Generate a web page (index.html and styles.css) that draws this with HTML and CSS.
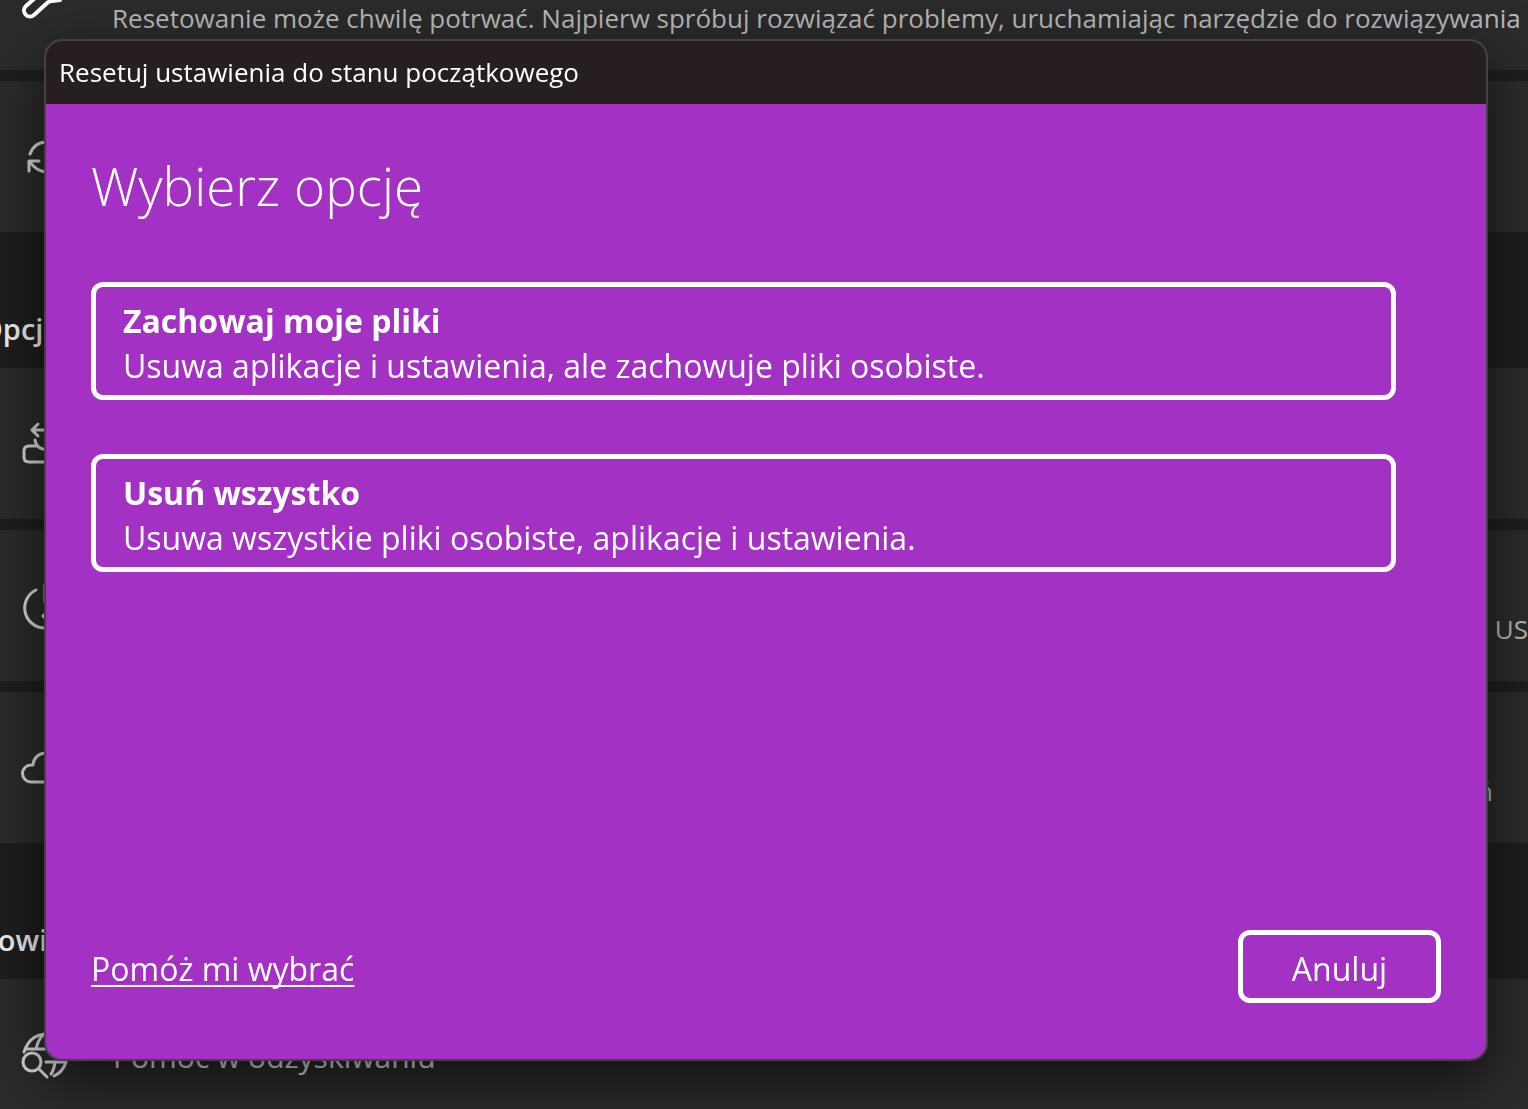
FILE: index.html
```html
<!DOCTYPE html>
<html lang="pl">

<head>
    <meta charset="UTF-8">
    <meta name="viewport" content="width=device-width, initial-scale=1.0">
    <title>Resetuj ustawienia do stanu początkowego</title>
    <link rel="stylesheet" href="styles.css">
</head>

<body>
    <!-- Ustawienia w tle -->
    <main class="settings">
        <div class="row">
            <svg class="icon bright" viewBox="0 0 48 48"><path d="M14 27L5 35a6 6 0 0 0 8 9L25 33q3-3 6-3l8-1"/></svg>
            <p class="description">Resetowanie może chwilę potrwać. Najpierw spróbuj rozwiązać problemy, uruchamiając narzędzie do rozwiązywania</p>
        </div>
        <div class="row">
            <svg class="icon" viewBox="0 0 48 48"><path d="M9 21C12 13 18 9 26 9M27 39C19 39 13 35 9 29M8 38V28h10"/></svg>
        </div>
        <h2>Opcj</h2>
        <div class="row">
            <svg class="icon" viewBox="0 0 48 48"><path d="M17 4l-6 6 6 6M11 10h29M15 26H8q-5 0-5 5v6q0 5 5 5h32M14 20q1 9 12 10"/></svg>
        </div>
        <div class="row">
            <svg class="icon" viewBox="0 0 48 48"><path d="M15 8A20 20 0 0 0 24 46M24 3v17"/><path class="solid" d="M22 34l5-4v8z"/></svg>
            <p class="description end">US</p>
        </div>
        <div class="row">
            <svg class="icon" viewBox="0 0 48 48"><path d="M38 38H10a8 8 0 0 1 0-17h2C13 13 18 9 26 9"/></svg>
            <p class="description end inset">ń</p>
        </div>
        <h2>Powi</h2>
        <div class="row">
            <svg class="icon" viewBox="0 0 48 48"><path d="M3 21C7 9 15 3 26 3M5 18h21M15 18q2-9 7-14M25 31h20q-3 10-12 14M34 31q-1 8-4 12"/><circle cx="11" cy="31" r="9"/><path d="M18 38l8 8"/></svg>
            <p class="name">Pomoc w odzyskiwaniu</p>
        </div>
    </main>

    <!-- Okno resetowania -->
    <div class="dialog" role="dialog" aria-labelledby="dialog-title">
        <header class="title-bar" id="dialog-title">Resetuj ustawienia do stanu początkowego</header>
        <div class="dialog-body">
            <h1>Wybierz opcję</h1>
            <div class="options">
                <button class="option" type="button">
                    <strong>Zachowaj moje pliki</strong>
                    <span>Usuwa aplikacje i ustawienia, ale zachowuje pliki osobiste.</span>
                </button>
                <button class="option" type="button">
                    <strong>Usuń wszystko</strong>
                    <span>Usuwa wszystkie pliki osobiste, aplikacje i ustawienia.</span>
                </button>
            </div>
            <footer class="dialog-footer">
                <a href="#">Pomóż mi wybrać</a>
                <button class="cancel" type="button">Anuluj</button>
            </footer>
        </div>
    </div>
</body>

</html>
```

FILE: styles.css
```css
* {
    margin: 0;
    padding: 0;
    box-sizing: border-box;
}

body {
    height: 100vh;
    font-family: "Segoe UI", "Open Sans", "Noto Sans", sans-serif;
    background: #1e1e1e;
    color: #fff;
    overflow: hidden;
}

/* Lista ustawień, przewinięta w górę */
.settings {
    margin-top: -81px;
}

.row {
    display: flex;
    align-items: center;
    gap: 44px;
    height: 151px;
    padding-left: 21px;
    background: #2b2b2b;
    line-height: 44px;
    white-space: nowrap;
}

.row + .row {
    margin-top: 11px;
}

.row .description {
    padding-top: 46px;
    margin-left: -1px;
    font-size: 26px;
    color: #b8b8b8;
}

.row .end {
    margin-left: auto;
}

.row .inset {
    padding-right: 35px;
}

.row .name {
    padding-top: 4px;
    font-size: 30px;
    color: #e0e0e0;
}

.settings h2 {
    height: 136px;
    margin-left: -20px;
    padding-top: 59px;
    font-size: 29px;
    line-height: 76px;
    font-weight: 600;
    color: #f0f0f0;
}

.icon {
    flex: none;
    width: 48px;
    height: 48px;
    fill: none;
    stroke: #d8d8d8;
    stroke-width: 3;
    stroke-linecap: round;
    stroke-linejoin: round;
}

.icon.bright {
    stroke: #fff;
    stroke-width: 4;
}

.icon .solid {
    fill: #d8d8d8;
}

/* Okno */
.dialog {
    position: fixed;
    inset: 39px 40px 48px 44px;
    display: flex;
    flex-direction: column;
    border: 2px solid #454042;
    border-radius: 18px;
    background: #a332c4;
    box-shadow: 0 20px 60px rgba(0, 0, 0, 0.6);
    overflow: hidden;
}

.title-bar {
    padding: 0 13px;
    background: #271e20;
    font-size: 26px;
    line-height: 63px;
}

.dialog-body {
    flex: 1;
    display: flex;
    flex-direction: column;
    padding: 46px 45px 56px;
}

h1 {
    font-size: 53px;
    line-height: 72px;
    font-weight: 300;
}

.options {
    display: flex;
    flex-direction: column;
    gap: 54px;
    margin-top: 60px;
    margin-right: 45px;
}

.option,
.cancel {
    border: 5px solid #fff;
    border-radius: 12px;
    background: transparent;
    font-family: inherit;
    font-size: 32px;
    line-height: 45px;
    color: #fff;
}

.option {
    padding: 11px 27px 7px;
    text-align: left;
}

.option strong,
.option span {
    display: block;
}

.dialog-footer {
    display: flex;
    align-items: center;
    justify-content: space-between;
    margin-top: auto;
}

.dialog-footer a {
    padding-top: 4px;
    font-size: 32px;
    line-height: 45px;
    color: #fff;
    text-decoration-thickness: 2px;
    text-underline-offset: 4px;
    text-decoration-skip-ink: none;
}

.cancel {
    width: 203px;
    padding: 11px 0 7px;
}
```
